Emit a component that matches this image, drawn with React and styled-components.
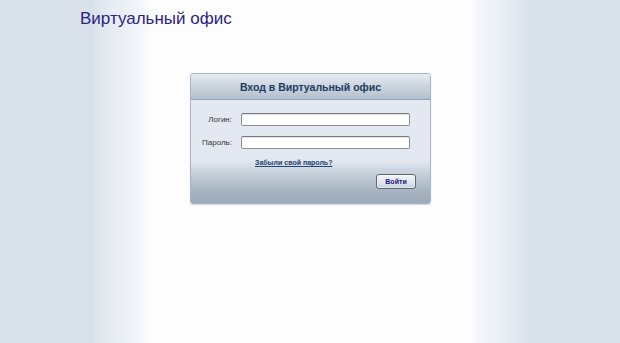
import React from 'react';
import styled, { createGlobalStyle } from 'styled-components';

const Global = createGlobalStyle`
  html, body {
    margin: 0;
    padding: 0;
    height: 100%;
  }
  body {
    background: linear-gradient(to right,
      #d8e1ea 0, #d8e1ea 90px, #e6ecf2 110px, #f2f5f9 140px, #fdfdfe 150px,
      #fdfdfe 470px, #f2f5f9 480px, #e6ecf2 510px, #d8e1ea 530px, #d8e1ea 100%);
    font-family: "Liberation Sans", Arial, sans-serif;
  }
`;

const Page = styled.div`
  min-height: 343px;
  padding: 8px 0 0 80px;
  box-sizing: border-box;
`;

const Title = styled.h1`
  margin: 0;
  font-family: "Liberation Sans", Arial, sans-serif;
  font-weight: normal;
  font-size: 17px;
  color: #2b2283;
  line-height: 21px;
`;

const Panel = styled.div`
  width: 239px;
  margin: 44px 0 0 110px;
  border: 1px solid #a7b4c3;
  border-radius: 3px;
  box-shadow: 0 1px 1px rgba(120, 135, 155, 0.35);
  background: linear-gradient(to bottom, #e4e9f1 0, #e4e9f1 86px, #c4cfd9 100px, #a8b5c3 116px, #9aa9b8 130px);
  overflow: hidden;
`;

const Header = styled.div`
  height: 25px;
  display: flex;
  align-items: center;
  justify-content: center;
  background: linear-gradient(to bottom, #e9edf2 0, #cdd6df 45%, #b3c0cd 100%);
  border-bottom: 1px solid #95a4b4;
  font-family: "Liberation Sans", Arial, sans-serif;
  font-weight: bold;
  font-size: 10.5px;
  color: #1d3a63;
`;

const Form = styled.div`
  display: grid;
  grid-template-columns: 41px 169px;
  column-gap: 9px;
  row-gap: 10px;
  padding: 13px 0 0 0;
  align-items: center;
  line-height: 10px;
`;

const Label = styled.label`
  font-size: 8px;
  line-height: 10px;
  color: #333;
  text-align: right;
`;

const Input = styled.input`
  box-sizing: border-box;
  height: 13px;
  width: 169px;
  margin: 0;
  padding: 0 2px;
  border: 1px solid #8a8f96;
  border-top-color: #75797f;
  border-radius: 2px;
  background: #fff;
  box-shadow: inset 0 1px 1px rgba(0, 0, 0, 0.12);
  font-size: 9px;
`;

const LinkRow = styled.div`
  padding: 9px 0 0 64px;
  font-size: 7px;
  line-height: 10px;
`;

const Forgot = styled.a`
  font-size: 7px;
  font-weight: bold;
  color: #1d4275;
  text-decoration: underline;
  cursor: pointer;
`;

const Actions = styled.div`
  display: flex;
  justify-content: flex-end;
  padding: 6px 14px 14px 0;
  line-height: 0;
`;

const Button = styled.button`
  width: 40px;
  height: 15px;
  padding: 0;
  border: 1px solid #5f6670;
  border-radius: 3px;
  background: linear-gradient(to bottom, #f4f6f8 0, #dfe4ea 60%, #c8d0d9 100%);
  box-shadow: 0 0 0 1px rgba(255, 255, 255, 0.4) inset;
  font-family: "Liberation Sans", Arial, sans-serif;
  font-size: 7px;
  line-height: 13px;
  font-weight: bold;
  color: #1b1780;
`;

export default function App() {
  return (
    <>
      <Global />
      <Page>
        <Title>Виртуальный офис</Title>
        <Panel>
          <Header>Вход в Виртуальный офис</Header>
          <Form>
            <Label>Логин:</Label>
            <Input type="text" />
            <Label>Пароль:</Label>
            <Input type="password" />
          </Form>
          <LinkRow>
            <Forgot>Забыли свой пароль?</Forgot>
          </LinkRow>
          <Actions>
            <Button>Войти</Button>
          </Actions>
        </Panel>
      </Page>
    </>
  );
}
